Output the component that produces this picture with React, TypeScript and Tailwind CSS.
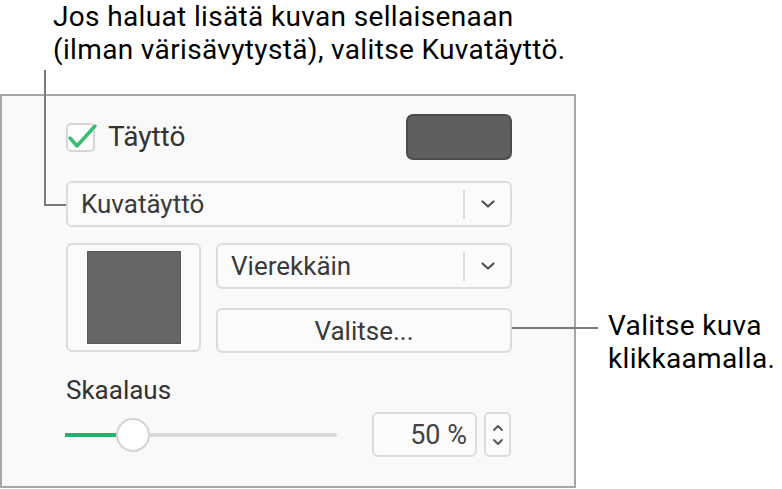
import React from "react";

function Chevron({ className = "" }: { className?: string }) {
  return (
    <svg width="16" height="10" viewBox="0 0 16 10" className={className}>
      <path d="M2.5 2.5 L8 7.5 L13.5 2.5" fill="none" stroke="#505050" strokeWidth="2.2" strokeLinecap="round" strokeLinejoin="round" />
    </svg>
  );
}

function Select({ label, className = "" }: { label: string; className?: string }) {
  return (
    <div className={`flex items-center h-[46px] rounded-[6px] border-2 border-[#dcdcdc] bg-[#fbfbfb] ${className}`}>
      <span className="flex-1 pl-[13px] text-[26px] leading-[30px] text-[#3a3a3a]">{label}</span>
      <div className="w-[2px] h-[29px] bg-[#dcdcdc]" />
      <div className="w-[45px] flex items-center justify-center">
        <Chevron />
      </div>
    </div>
  );
}

export default function App() {
  return (
    <div className="relative w-[782px] h-[489px] bg-white overflow-hidden font-['Roboto',sans-serif]">
      <div className="pl-[53px] text-[28px] leading-[33px] tracking-[0.35px] text-black">
        Jos haluat lisätä kuvan sellaisenaan
        <br />
        (ilman värisävytystä), valitse Kuvatäyttö.
      </div>

      <div className="flex mt-[28px]">
        <div className="w-[576px] h-[394px] border-2 border-[#a6a6a6] bg-[#f9f9f9] pl-[64px] pt-[18px]">
          <div className="w-[446px]">
            <div className="flex items-center justify-between h-[46px]">
              <div className="flex items-center">
                <div className="relative w-[29px] h-[29px] rounded-[5px] border-2 border-[#d6d6d6] bg-[#fdfdfd]">
                  <svg width="34" height="30" viewBox="0 0 34 30" className="absolute left-[-1px] top-[-2px]">
                    <path d="M3 15 L10 23 L28 3" fill="none" stroke="#3bbd78" strokeWidth="3.5" strokeLinecap="round" strokeLinejoin="round" />
                  </svg>
                </div>
                <span className="ml-[13px] text-[28px] leading-[32px] text-[#333]">Täyttö</span>
              </div>
              <div className="w-[106px] h-[46px] rounded-[7px] border-2 border-[#4c4c4c] bg-[#5f5f5f]" />
            </div>

            <Select label="Kuvatäyttö" className="mt-[21px] w-[446px]" />

            <div className="flex mt-[16px]">
              <div className="w-[135px] h-[109px] rounded-[6px] border-2 border-[#dcdcdc] bg-[#fbfbfb] flex items-center justify-center">
                <div className="w-[94px] h-[93px] bg-[#666666] border border-[#5a5a5a]" />
              </div>
              <div className="ml-[15px] w-[296px] flex flex-col gap-[19px]">
                <Select label="Vierekkäin" className="w-[296px] h-[45px]" />
                <div className="h-[45px] rounded-[6px] border-2 border-[#dcdcdc] bg-[#fbfbfb] flex items-center justify-center text-[26px] leading-[30px] text-[#3a3a3a]">
                  Valitse...
                </div>
              </div>
            </div>

            <div className="mt-[22px] text-[26px] leading-[30px] text-[#333]">Skaalaus</div>

            <div className="flex items-center mt-[7px] h-[45px]">
              <div className="relative w-[272px] h-[4px] bg-[#d9d9d9] rounded-full -ml-[1px]">
                <div className="absolute left-0 top-0 h-[4px] w-[56px] bg-[#1fb46c]" />
                <div className="absolute left-[51px] top-[-15px] w-[34px] h-[34px] rounded-full border-2 border-[#d4d4d4] bg-white" />
              </div>
              <div className="ml-[35px] w-[105px] h-[45px] rounded-[6px] border-2 border-[#dcdcdc] bg-[#fbfbfb] flex items-center justify-end pr-[8px] text-[27px] leading-[30px] text-[#444]">
                50&nbsp;%
              </div>
              <div className="ml-[7px] w-[27px] h-[45px] rounded-[5px] border-2 border-[#dcdcdc] bg-[#fbfbfb] flex flex-col items-center justify-center gap-[6px]">
                <svg width="12" height="8" viewBox="0 0 12 8">
                  <path d="M2 6 L6 2 L10 6" fill="none" stroke="#555" strokeWidth="1.8" strokeLinecap="round" strokeLinejoin="round" />
                </svg>
                <svg width="12" height="8" viewBox="0 0 12 8">
                  <path d="M2 2 L6 6 L10 2" fill="none" stroke="#555" strokeWidth="1.8" strokeLinecap="round" strokeLinejoin="round" />
                </svg>
              </div>
            </div>
          </div>
        </div>

        <div className="ml-[32px] mt-[215px] text-[28px] leading-[33px] tracking-[0.35px] text-black">
          Valitse kuva
          <br />
          klikkaamalla.
        </div>
      </div>

      {/* leader lines */}
      <div className="absolute left-[44px] top-[70px] w-[2px] h-[136px] bg-[#7a7a7a]" />
      <div className="absolute left-[44px] top-[204px] w-[22px] h-[2px] bg-[#7a7a7a]" />
      <div className="absolute left-[512px] top-[327px] w-[86px] h-[2px] bg-[#7a7a7a]" />
    </div>
  );
}
